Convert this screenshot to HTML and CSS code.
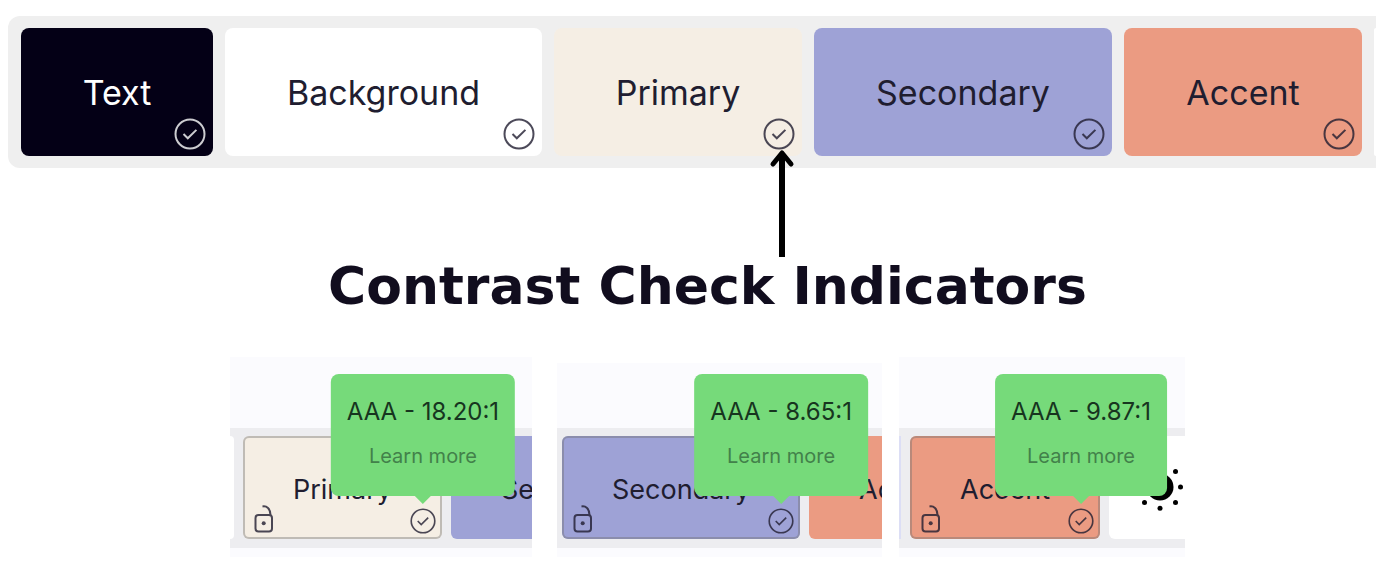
FILE: index.html
```html
<!DOCTYPE html>
<html lang="en">
<head>
<meta charset="utf-8">
<meta name="viewport" content="width=device-width, initial-scale=1">
<title>Contrast Check Indicators</title>
<link rel="stylesheet" href="styles.css">
</head>
<body>
<svg class="defs" aria-hidden="true">
  <symbol id="check" viewBox="0 0 32 32"><circle cx="16" cy="16" r="14.5"/><path d="M9.5 16l4.3 4.3 8.6-8.4"/></symbol>
  <symbol id="lock" viewBox="0 0 20 28"><rect x="1.5" y="10" width="16.5" height="16.5" rx="3"/><path d="M8.5 1.5c4-.8 8 2 8 8.5"/><circle class="dot" cx="9.7" cy="18.2" r="2"/></symbol>
</svg>
<main>
  <section class="palette" aria-label="Palette">
    <div class="swatch text"><button class="name">Text</button><button class="check" aria-label="Text contrast"><svg><use href="#check"/></svg></button></div>
    <div class="swatch background"><button class="name">Background</button><button class="check" aria-label="Background contrast"><svg><use href="#check"/></svg></button></div>
    <div class="swatch primary"><button class="name">Primary</button><button class="check" aria-label="Primary contrast"><svg><use href="#check"/></svg></button>
      <svg class="arrow" viewBox="0 0 26 108" aria-hidden="true"><path class="shaft" d="M13 5V108"/><path class="head" d="M4 15L13 4L22 15"/></svg>
    </div>
    <div class="swatch secondary"><button class="name">Secondary</button><button class="check" aria-label="Secondary contrast"><svg><use href="#check"/></svg></button></div>
    <div class="swatch accent"><button class="name">Accent</button><button class="check" aria-label="Accent contrast"><svg><use href="#check"/></svg></button></div>
    <div class="swatch edge"></div>
  </section>

  <h1>Contrast Check Indicators</h1>

  <section class="examples" aria-label="Examples">
    <article class="panel first">
      <div class="strip">
        <div class="tile before white"></div>
        <div class="tile current primary">
          <button class="name">Primary</button>
          <button class="lock" aria-label="Lock Primary"><svg><use href="#lock"/></svg></button>
          <div class="status">
            <button class="check" aria-label="Primary contrast"><svg><use href="#check"/></svg></button>
            <div class="tooltip" role="tooltip"><strong>AAA - 18.20:1</strong><a href="#contrast">Learn more</a></div>
          </div>
        </div>
        <div class="tile next secondary"><button class="name">Secondary</button></div>
      </div>
    </article>
    <article class="panel second">
      <div class="strip">
        <div class="tile current secondary">
          <button class="name">Secondary</button>
          <button class="lock" aria-label="Lock Secondary"><svg><use href="#lock"/></svg></button>
          <div class="status">
            <button class="check" aria-label="Secondary contrast"><svg><use href="#check"/></svg></button>
            <div class="tooltip" role="tooltip"><strong>AAA - 8.65:1</strong><a href="#contrast">Learn more</a></div>
          </div>
        </div>
        <div class="tile next accent"><button class="name">Accent</button></div>
      </div>
    </article>
    <article class="panel third">
      <div class="strip">
        <div class="tile before lilac"></div>
        <div class="tile current accent">
          <button class="name">Accent</button>
          <button class="lock" aria-label="Lock Accent"><svg><use href="#lock"/></svg></button>
          <div class="status">
            <button class="check" aria-label="Accent contrast"><svg><use href="#check"/></svg></button>
            <div class="tooltip" role="tooltip"><strong>AAA - 9.87:1</strong><a href="#contrast">Learn more</a></div>
          </div>
        </div>
        <div class="tile next white">
          <button class="theme" aria-label="Toggle theme"><svg viewBox="0 0 48 48"><circle cx="24" cy="24" r="13.5"/><circle cx="24" cy="2.8" r="2.5"/><circle cx="24" cy="45.2" r="2.5"/><circle cx="3.5" cy="24" r="2.5"/><circle cx="44.5" cy="24" r="2.5"/><circle cx="8.5" cy="8.5" r="2.5"/><circle cx="39.5" cy="8.5" r="2.5"/><circle cx="8.5" cy="39.5" r="2.5"/><circle cx="39.5" cy="39.5" r="2.5"/></svg></button>
        </div>
      </div>
    </article>
  </section>
</main>
</body>
</html>
```
FILE: styles.css
```css
* { box-sizing: border-box; }
body {
  margin: 0;
  background: #fff;
  color: #201d30;
  font-family: Inter, "Liberation Sans", sans-serif;
}
main { padding: 16px 12px 12px 8px; }
button {
  padding: 0;
  border: 0;
  background: none;
  color: inherit;
  font: inherit;
  cursor: pointer;
}
.defs { display: block; width: 0; height: 0; }
svg { display: block; fill: none; stroke: currentColor; }

.text { background: #040016; color: #fff; }
.background, .white, .edge { background: #fff; }
.primary { background: #f5eee4; }
.secondary { background: #9ea2d6; }
.accent { background: #eb9b82; }
.lilac { background: #dcdef5; }

.palette {
  display: flex;
  gap: 12px;
  padding: 12px 0 12px 13px;
  border-radius: 12px 0 0 12px;
  background: #efefef;
}
.swatch {
  position: relative;
  display: flex;
  justify-content: center;
  min-width: 0;
  padding: 44px 0 42px;
  border-radius: 8px;
  font-size: 34px;
  line-height: 42px;
}
.swatch.text { flex: 192 1 0; }
.swatch.background { flex: 317 1 0; }
.swatch.primary { flex: 248 1 0; }
.swatch.secondary { flex: 298 1 0; }
.swatch.accent { flex: 238 1 0; }
.swatch.edge { flex: 0 0 2px; border-radius: 8px 0 0 8px; }
.check svg { width: 100%; height: 100%; stroke-width: 2; }
.check { opacity: .8; }
.swatch .check {
  position: absolute;
  right: 7px;
  bottom: 6px;
  width: 32px;
  height: 32px;
}
.arrow {
  position: absolute;
  z-index: 1;
  top: 121px;
  right: 7px;
  width: 26px;
  height: 108px;
  stroke: #000;
}
.shaft { stroke-width: 6; }
.head { stroke-width: 5; stroke-linecap: round; stroke-linejoin: round; }

h1 {
  margin: 84px 0 0 31px;
  color: #110d1e;
  font-family: "DejaVu Sans", Inter, sans-serif;
  font-size: 52px;
  font-weight: 700;
  line-height: 68px;
  text-align: center;
  white-space: nowrap;
}

.examples {
  display: flex;
  justify-content: center;
  gap: 17px;
  margin: 37px 0 0 31px;
}
.panel { overflow: hidden; padding: 71px 0 9px; background: #fbfbfe; }
.first { flex: 0 1 302px; margin-right: 8px; }
.second { flex: 0 1 325px; margin-top: 6px; padding-top: 65px; }
.third { flex: 0 1 286px; }
.strip {
  display: flex;
  gap: 9px;
  padding: 8px 0 9px;
  background: #ededf0;
}
.second .strip { padding-left: 5px; }
.tile {
  position: relative;
  flex: none;
  height: 103px;
  border-radius: 6px;
  font-size: 27px;
  line-height: 34px;
}
.tile .name { padding: 37px 50px 32px; }
.before { width: 4px; border-radius: 0 6px 6px 0; }
.before.lilac { width: 2px; border-radius: 0; }
.current { box-shadow: inset 0 0 0 2px rgba(110, 110, 110, .4); }
.lock {
  position: absolute;
  left: 11px;
  bottom: 6px;
  width: 20px;
  height: 28px;
}
.lock svg { width: 20px; height: 28px; stroke-width: 2; opacity: .8; }
.dot { fill: currentColor; stroke: none; }
.status {
  position: absolute;
  z-index: 1;
  right: 6px;
  bottom: 5px;
  width: 26px;
  height: 26px;
}
.status .check { display: block; width: 26px; height: 26px; }
.tooltip {
  position: absolute;
  bottom: 38px;
  left: 50%;
  transform: translateX(-50%);
  display: flex;
  flex-direction: column;
  align-items: center;
  gap: 14px;
  padding: 22px 16px 26px;
  border-radius: 8px;
  background: #76da7a;
  white-space: nowrap;
}
.tooltip::after {
  content: "";
  position: absolute;
  top: 100%;
  left: 50%;
  margin-left: -8px;
  border: 8px solid transparent;
  border-top-color: #76da7a;
  border-bottom: 0;
}
.tooltip strong { color: #17351f; font-size: 24px; font-weight: 400; line-height: 32px; }
.tooltip a { color: #42814a; font-size: 20px; line-height: 28px; text-decoration: none; }
.theme { display: block; margin: 27px; }
.theme svg { width: 48px; height: 48px; fill: #000; stroke: none; }
```
